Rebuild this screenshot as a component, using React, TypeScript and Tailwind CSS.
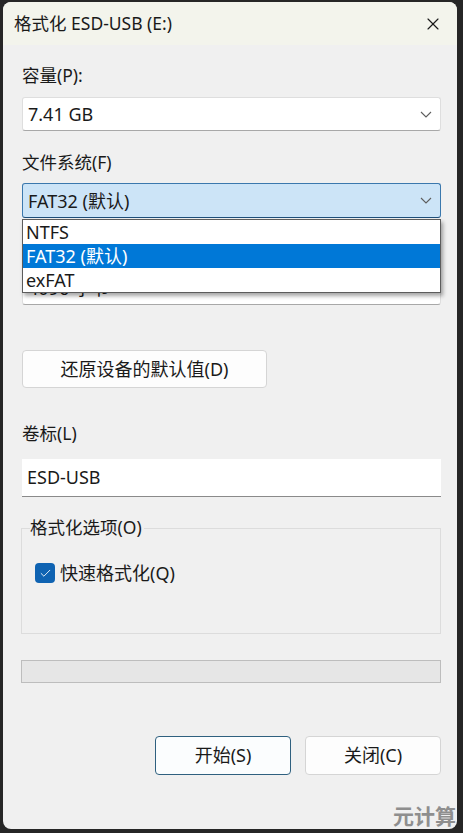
import { Check, X } from "lucide-react";

const FONT = { fontFamily: '"Noto Sans", "Noto Sans CJK SC", sans-serif' };

function Chevron() {
  return (
    <svg width="12" height="7" viewBox="0 0 12 7" fill="none" className="shrink-0">
      <path d="M1 1l5 5 5-5" stroke="#5f5f5f" strokeWidth="1.1" />
    </svg>
  );
}

function Combo({ value, active }: { value: string; active?: boolean }) {
  return (
    <div
      className={
        active
          ? "h-[35px] flex items-center justify-between pl-[5px] pr-[8px] rounded-[3px] border border-[#3b78ad] border-b-[#1f4f7a] bg-[#cce4f7]"
          : "h-[34px] flex items-center justify-between pl-[5px] pr-[8px] rounded-[3px] border border-[#dedede] border-b-[#a8a8a8] bg-white"
      }
    >
      <span className="text-[18px] text-[#1a1a1a] leading-none">{value}</span>
      <Chevron />
    </div>
  );
}

export default function App() {
  return (
    <div className="w-[463px] h-[833px] bg-[#262626] pt-[2px] pl-[3px] pr-[6px] pb-[4px]" style={FONT}>
      <div className="relative h-full rounded-[8px] overflow-hidden bg-[#f0f0f0] flex flex-col">
        {/* Title bar */}
        <div className="h-[43px] bg-[#f3f4ec] flex items-center justify-between pl-[11px] pr-[14px] shrink-0">
          <span className="text-[17.5px] text-[#1a1a1a]">格式化 ESD-USB (E:)</span>
          <X size={20} strokeWidth={1.4} className="text-[#1a1a1a]" />
        </div>

        <div className="flex flex-col pl-[19px] pr-[16px] text-[#1a1a1a]">
          <p className="mt-[18px] h-[24px] leading-[24px] text-[17.5px]">容量(P):</p>
          <div className="mt-[10px]">
            <Combo value="7.41 GB" />
          </div>

          <p className="mt-[19px] h-[24px] leading-[24px] text-[17.5px]">文件系统(F)</p>
          <div className="relative mt-[9px] z-10">
            <Combo value="FAT32 (默认)" active />
            <div className="absolute left-0 right-0 top-[36px] bg-white border border-[#5c5c5c] shadow-[2px_3px_4px_rgba(0,0,0,0.35)]">
              <div className="h-[24px] flex items-center pl-[3px] text-[18px]">NTFS</div>
              <div className="h-[24px] flex items-center pl-[3px] text-[18px] bg-[#0078d7] text-white">FAT32 (默认)</div>
              <div className="h-[24px] flex items-center pl-[3px] text-[18px]">exFAT</div>
            </div>
          </div>

          {/* allocation size row, hidden under the open list */}
          <div className="mt-[19px] h-[24px]" />
          <div className="mt-[10px]">
            <Combo value="4096 字节" />
          </div>

          <button
            type="button"
            className="mt-[45px] w-[245px] h-[38px] bg-[#fdfdfd] border border-[#d5d5d5] rounded-[4px] text-[18px] text-[#1a1a1a]"
          >
            还原设备的默认值(D)
          </button>

          <p className="mt-[33px] h-[24px] leading-[24px] text-[17.5px]">卷标(L)</p>
          <div className="mt-[14px] h-[38px] flex items-center pl-[5px] bg-white border-b border-[#8a8a8a] text-[18px]">
            ESD-USB
          </div>

          {/* Group box */}
          <div className="relative mt-[31px] h-[106px] border border-[#dcdcdc] ml-[-1px]">
            <span className="absolute left-[8px] top-[-14px] bg-[#f0f0f0] pr-[2px] text-[17.5px] leading-[24px]">
              格式化选项(O)
            </span>
            <div className="flex items-center gap-[5px] mt-[32px] ml-[13px]">
              <span className="w-[20px] h-[20px] rounded-[4px] bg-[#0f63b2] flex items-center justify-center">
                <Check size={13} strokeWidth={1.6} className="text-white" />
              </span>
              <span className="text-[18px] leading-[24px]">快速格式化(Q)</span>
            </div>
          </div>

          {/* Progress */}
          <div className="mt-[26px] h-[23px] bg-[#e6e6e6] border border-[#bdbdbd] ml-[-1px]" />

          <div className="mt-[53px] flex justify-end gap-[14px]">
            <button
              type="button"
              className="w-[136px] h-[39px] bg-[#fbfdfe] border border-[#2f607f] rounded-[4px] text-[18px] text-[#1a1a1a]"
            >
              开始(S)
            </button>
            <button
              type="button"
              className="w-[136px] h-[39px] bg-[#fdfdfd] border border-[#d5d5d5] rounded-[4px] text-[18px] text-[#1a1a1a]"
            >
              关闭(C)
            </button>
          </div>
        </div>

        {/* watermark */}
        <span className="absolute right-[1px] bottom-[-3px] text-[21px] font-bold text-[#8e8e8e]">
          元计算
        </span>
      </div>
    </div>
  );
}
